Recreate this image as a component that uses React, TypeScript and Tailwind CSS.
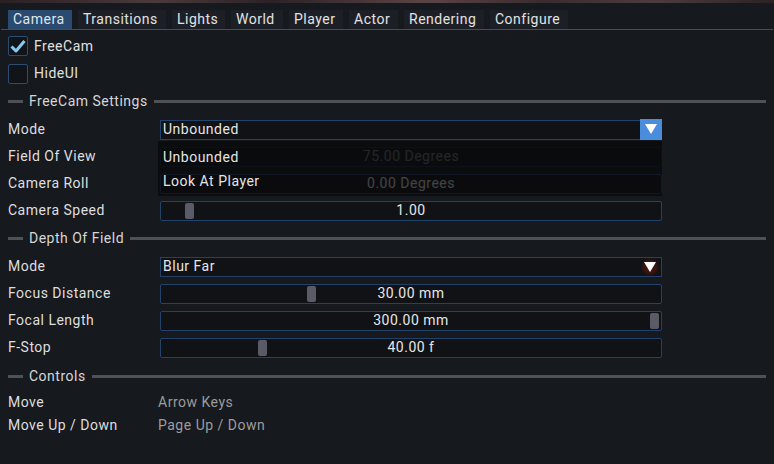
import React from "react";

const tabs = [
  { name: "Camera", w: "w-[64px]", active: true },
  { name: "Transitions", w: "w-[88px]" },
  { name: "Lights", w: "w-[53px]" },
  { name: "World", w: "w-[52px]" },
  { name: "Player", w: "w-[54px]" },
  { name: "Actor", w: "w-[49px]" },
  { name: "Rendering", w: "w-[80px]" },
  { name: "Configure", w: "w-[78px]" },
];

function SectionHeader({ title, h }: { title: string; h: string }) {
  return (
    <div className={`flex items-center ${h}`}>
      <div className="w-[15px] h-[3px] bg-[#4f5157]" />
      <span className="px-[6px] text-[#d6d6d6]">{title}</span>
      <div className="flex-1 h-[3px] bg-[#4f5157]" />
    </div>
  );
}

function Row({ label, children }: { label: string; children?: React.ReactNode }) {
  return (
    <div className="flex items-center h-[27px]">
      <div className="w-[152px] text-[#dedede]">{label}</div>
      <div className="w-[502px]">{children}</div>
    </div>
  );
}

function Slider({ value, pos }: { value: string; pos?: number }) {
  return (
    <div className="relative h-[20px] rounded-[2px] border border-[#23426a] bg-[#101216] flex items-center justify-center">
      {pos !== undefined && (
        <div
          className="absolute top-[1px] h-[16px] w-[9px] rounded-[2px] bg-[#5b5b68]"
          style={{ left: pos }}
        />
      )}
      <span className="relative text-[#e6e6e6]">{value}</span>
    </div>
  );
}

function Triangle() {
  return (
    <svg width="12" height="10" viewBox="0 0 12 10">
      <path d="M0 0 L12 0 L6 10 Z" fill="#ffffff" />
    </svg>
  );
}

export default function App() {
  return (
    <div
      className="relative w-[774px] h-[464px] overflow-hidden bg-[#16191e] text-[14px] tracking-[0.5px]"
      style={{ fontFamily: "Roboto, 'Noto Sans', sans-serif" }}
    >
      <div className="h-[3px] bg-[linear-gradient(90deg,#2a2024,#4a3a3c_20%,#2c2226_35%,#5a4446_55%,#3a2c2e_70%,#4c3c3e_85%,#2a2224)]" />

      {/* tabs */}
      <div className="pt-[7px] px-[8px] flex gap-[6px]">
        {tabs.map((t) => (
          <div
            key={t.name}
            className={`${t.w} h-[19px] pl-[5px] flex items-center ${
              t.active ? "bg-[#2a4a6f] text-[#dfe6ee]" : "bg-[#1c2026] text-[#e2e2e2]"
            }`}
          >
            {t.name}
          </div>
        ))}
      </div>
      <div className="h-[1px] mx-[1px] bg-[#3a4f6d]" />

      <div className="px-[8px]">
        <div className="flex items-center h-[30px] pt-[2px]">
          <div className="w-[20px] h-[20px] rounded-[2px] border border-[#2d4c72] bg-[#111419] flex items-center justify-center">
            <svg width="16" height="14" viewBox="0 0 16 14">
              <path
                d="M1.5 7.5 L6 12 L14.5 2"
                stroke="#86cbec"
                strokeWidth="3"
                fill="none"
                strokeLinejoin="round"
              />
            </svg>
          </div>
          <span className="ml-[6px] text-[#e0e0e0]">FreeCam</span>
        </div>
        <div className="flex items-center h-[27px]">
          <div className="w-[20px] h-[20px] rounded-[2px] border border-[#2d4c72] bg-[#111419]" />
          <span className="ml-[6px] text-[#e0e0e0]">HideUI</span>
        </div>

        <SectionHeader title="FreeCam Settings" h="h-[29px]" />

        <div className="relative">
          <Row label="Mode">
            <div className="relative h-[20px] border border-[#23426a] bg-[#101216] flex items-center pl-[2px] text-[#e6e6e6]">
              Unbounded
              <div className="absolute right-[-1px] top-[-2px] w-[22px] h-[21px] bg-[#4a8ddc] flex items-center justify-center">
                <Triangle />
              </div>
            </div>
          </Row>
          <Row label="Field Of View">
            <Slider value="75.00 Degrees" />
          </Row>
          <Row label="Camera Roll">
            <Slider value="0.00 Degrees" />
          </Row>
          <Row label="Camera Speed">
            <Slider value="1.00" pos={24} />
          </Row>

          {/* open dropdown */}
          <div className="absolute left-[150px] top-[25px] w-[504px] h-[55px] flex flex-col">
            <div className="h-[30px] bg-[#090a0c]/[0.88] flex items-end pb-[3px] pl-[5px] text-[#e4e4e4]">
              Unbounded
            </div>
            <div className="h-[25px] bg-[#090a0c]/[0.74] flex items-start pl-[5px] text-[#e4e4e4]">
              Look At Player
            </div>
          </div>
        </div>

        <SectionHeader title="Depth Of Field" h="h-[29px]" />

        <Row label="Mode">
          <div className="relative h-[20px] border border-[#23426a] bg-[#101216] flex items-center pl-[2px] text-[#e6e6e6]">
            Blur Far
            <div className="absolute right-[2px] top-[0px] w-[18px] h-[18px] flex items-center justify-center bg-[radial-gradient(circle,#5a1a14_0%,#3a1410_45%,transparent_75%)]">
              <Triangle />
            </div>
          </div>
        </Row>
        <Row label="Focus Distance">
          <Slider value="30.00 mm" pos={146} />
        </Row>
        <Row label="Focal Length">
          <Slider value="300.00 mm" pos={489} />
        </Row>
        <Row label="F-Stop">
          <Slider value="40.00 f" pos={97} />
        </Row>

        <SectionHeader title="Controls" h="h-[30px]" />

        <div className="flex items-center h-[23px]">
          <div className="w-[150px] text-[#dedede]">Move</div>
          <div className="text-[#9c9c9c]">Arrow Keys</div>
        </div>
        <div className="flex items-center h-[23px]">
          <div className="w-[150px] text-[#dedede]">Move Up / Down</div>
          <div className="text-[#9c9c9c]">Page Up / Down</div>
        </div>
      </div>
    </div>
  );
}
